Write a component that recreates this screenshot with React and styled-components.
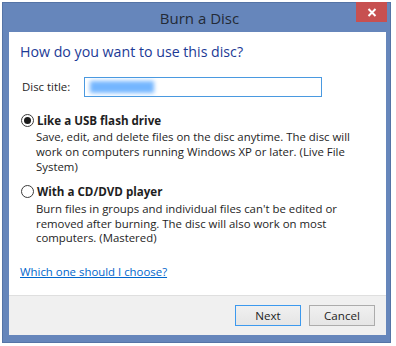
import React from "react";
import styled, { createGlobalStyle } from "styled-components";

const Global = createGlobalStyle`
  html, body {
    margin: 0;
    background: #ffffff;
  }
  body {
    font-family: "Open Sans", "Noto Sans", "Liberation Sans", sans-serif;
  }
`

const Frame = styled.div`
  margin: 2px 0 0 2px;
  width: 389px;
  height: 341px;
  box-sizing: border-box;
  background: #6686bb;
  border: 1px solid #5574a6;
  padding: 0 4px 7px 6px;
  display: flex;
  flex-direction: column;
`

const TitleBar = styled.div`
  height: 29px;
  display: flex;
  align-items: center;
  justify-content: center;
  position: relative;
  font-size: 15px;
  color: #232a36;
  padding-left: 4px;
`

const Close = styled.div`
  position: absolute;
  top: -1px;
  right: -1px;
  width: 31px;
  height: 20px;
  background: #c75050;
  display: flex;
  align-items: center;
  justify-content: center;
`

const Client = styled.div`
  flex: 1;
  display: flex;
  flex-direction: column;
`

const Body = styled.div`
  flex: 1;
  background: #ffffff;
  padding: 10px 11px 0 11px;
  font-size: 11.4px;
  color: #1e1e1e;
`

const Heading = styled.div`
  font-size: 14.2px;
  line-height: 20px;
  color: #1c3a96;
`

const FieldRow = styled.div`
  display: flex;
  align-items: center;
  margin-top: 15px;
  padding-left: 2px;
`

const Label = styled.label`
  width: 62px;
  line-height: 20px;
`

const Input = styled.div`
  width: 238px;
  height: 20px;
  box-sizing: border-box;
  border: 1px solid #4a99e0;
  position: relative;
  overflow: hidden;
`

const Redacted = styled.span`
  position: absolute;
  left: 5px;
  top: 3px;
  width: 64px;
  height: 12px;
  background: #74b6ff;
  filter: blur(2px);
`

const Option = styled.div`
  margin-top: ${p => p.$gap}px;
`

const RadioRow = styled.div`
  display: flex;
  align-items: center;
  line-height: 15px;
  font-weight: 700;
  font-size: 11.6px;
`

const Radio = styled.span`
  width: 13px;
  height: 13px;
  box-sizing: border-box;
  border-radius: 50%;
  border: 1px solid #3b3b3b;
  background: #ffffff;
  margin-left: 1px;
  margin-right: 3px;
  display: flex;
  align-items: center;
  justify-content: center;
  &::after {
    content: "";
    width: 7px;
    height: 7px;
    border-radius: 50%;
    background: ${p => (p.$checked ? "#1b1b1b" : "transparent")};
  }
`

const Desc = styled.div`
  margin-top: ${p => p.$top}px;
  padding-left: 16px;
  line-height: ${p => p.$lh}px;
`

const Link = styled.a`
  display: inline-block;
  margin-top: 18px;
  line-height: 15px;
  color: #0066cc;
  text-decoration: underline;
`

const Footer = styled.div`
  height: 40px;
  box-sizing: border-box;
  background: #f0f0f0;
  border-top: 1px solid #dfdfdf;
  display: flex;
  justify-content: flex-end;
  align-items: flex-start;
  gap: 8px;
  padding: 9px 11px 0 0;
`

const Button = styled.button`
  width: 66px;
  height: 21px;
  box-sizing: border-box;
  border: 1px solid ${p => (p.$focus ? "#3c99ee" : "#acacac")};
  background: linear-gradient(#f0f0f0, #e5e5e5);
  font-family: inherit;
  font-size: 11.6px;
  color: #1e1e1e;
  padding: 0;
  line-height: 19px;
`

export default function App() {
  return (
    <>
      <Global />
      <Frame>
        <TitleBar>
          Burn a Disc
          <Close>
            <svg width="10" height="9" viewBox="0 0 10 9">
              <path d="M1.5 1 L8.5 8 M8.5 1 L1.5 8" stroke="#ffffff" strokeWidth="2" />
            </svg>
          </Close>
        </TitleBar>
        <Client>
          <Body>
            <Heading>How do you want to use this disc?</Heading>
            <FieldRow>
              <Label>Disc title:</Label>
              <Input>
                <Redacted />
              </Input>
            </FieldRow>
            <Option $gap={16}>
              <RadioRow>
                <Radio $checked />
                Like a USB flash drive
              </RadioRow>
              <Desc $top={1} $lh={15}>
                Save, edit, and delete files on the disc anytime. The disc will<br />
                work on computers running Windows XP or later. (Live File<br />
                System)
              </Desc>
            </Option>
            <Option $gap={10}>
              <RadioRow>
                <Radio />
                With a CD/DVD player
              </RadioRow>
              <Desc $top={3} $lh={14.7}>
                Burn files in groups and individual files can't be edited or<br />
                removed after burning. The disc will also work on most<br />
                computers. (Mastered)
              </Desc>
            </Option>
            <Link>Which one should I choose?</Link>
          </Body>
          <Footer>
            <Button $focus>Next</Button>
            <Button>Cancel</Button>
          </Footer>
        </Client>
      </Frame>
    </>
  );
}
